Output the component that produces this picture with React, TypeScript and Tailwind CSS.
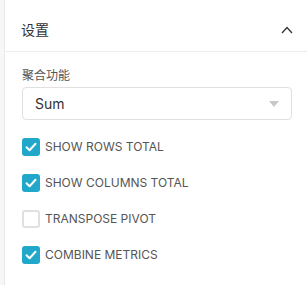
const options = [
  { label: "SHOW ROWS TOTAL", checked: true },
  { label: "SHOW COLUMNS TOTAL", checked: true },
  { label: "TRANSPOSE PIVOT", checked: false },
  { label: "COMBINE METRICS", checked: true },
];

function Checkbox({ checked }: { checked: boolean }) {
  return checked ? (
    <span className="flex h-[18px] w-[18px] shrink-0 items-center justify-center rounded-[3px] bg-[#20a7c9]">
      <svg width="12" height="10" viewBox="0 0 12 10" fill="none">
        <path d="M1.5 5.2 4.6 8.2 10.5 1.8" stroke="white" strokeWidth="2" strokeLinecap="round" strokeLinejoin="round" />
      </svg>
    </span>
  ) : (
    <span className="h-[18px] w-[18px] shrink-0 rounded-[3px] border-2 border-[#e0e0e0] bg-white" />
  );
}

export default function App() {
  return (
    <div className="flex h-[285px] w-[307px] bg-white font-['Inter','Noto_Sans_CJK_SC',sans-serif]">
      <div className="w-[5px] shrink-0 border-r border-[#e8e8e8] bg-[#f7f7f7]" />
      <div className="flex-1">
        <div className="ml-[1px] flex h-[52px] items-center justify-between border-b border-[#ececec] pl-[15px] pr-[14px] pt-[8px]">
          <span className="text-[14px] text-[#333]">设置</span>
          <svg width="12" height="8" viewBox="0 0 12 8" fill="none">
            <path d="M1 7 6 1.5 11 7" stroke="#333" strokeWidth="1.3" />
          </svg>
        </div>
        <div className="pl-[17px] pr-[15px] pt-[16px]">
          <div className="text-[12px] leading-[16px] text-[#555]">聚合功能</div>
          <div className="mt-[3px] flex h-[33px] items-center justify-between rounded-[4px] border border-[#e0e0e0] pl-[12px] pr-[12px]">
            <span className="text-[14px] text-[#333]">Sum</span>
            <svg width="10" height="6" viewBox="0 0 10 6">
              <path d="M0 0h10L5 6z" fill="#c8c8c8" />
            </svg>
          </div>
          <div className="mt-[9px] flex flex-col">
            {options.map((o) => (
              <label key={o.label} className="flex h-[36px] items-center gap-[5px]">
                <Checkbox checked={o.checked} />
                <span className="text-[12px] text-[#555]">{o.label}</span>
              </label>
            ))}
          </div>
        </div>
      </div>
    </div>
  );
}
